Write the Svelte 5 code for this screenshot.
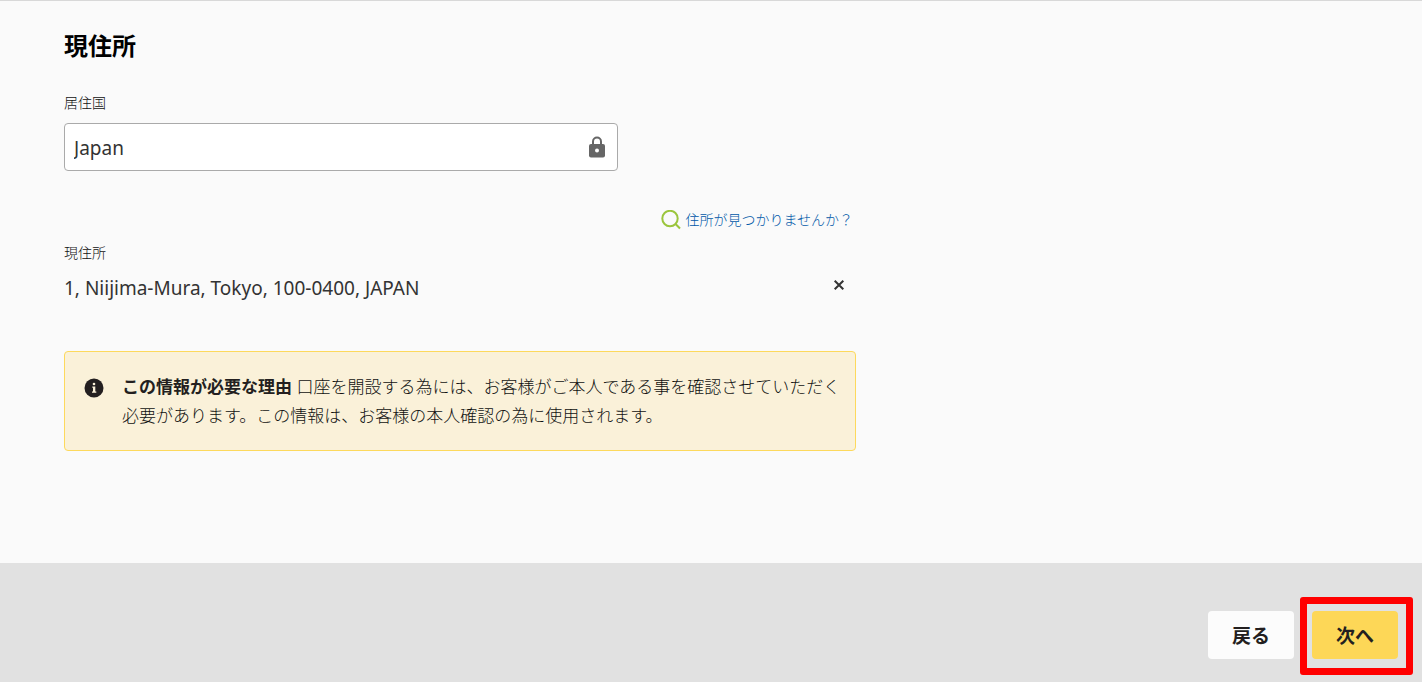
<script>
	let country = 'Japan';
	let address = '1, Niijima-Mura, Tokyo, 100-0400, JAPAN';

	function clearAddress() {
		address = '';
	}
</script>

<div class="page">
	<main class="content">
		<h1>現住所</h1>

		<label class="label" for="country">居住国</label>
		<div class="country-field">
			<input id="country" type="text" value={country} readonly>
			<svg class="lock" viewBox="0 0 18 22" aria-hidden="true">
				<path d="M5 9V5.5a4 4 0 0 1 8 0V9" fill="none" stroke="#666" stroke-width="2" />
				<rect x="1" y="8" width="16" height="13.5" rx="2" fill="#666" />
				<circle cx="9" cy="14.5" r="2" fill="#fff" />
			</svg>
		</div>

		<div class="search-row">
			<a href="#address-search" class="search-link">
				<svg viewBox="0 0 20 20" aria-hidden="true">
					<circle cx="9" cy="8.5" r="7.7" />
					<path d="M14.3 13.8L19 18.5" />
				</svg>
				<span>住所が見つかりませんか？</span>
			</a>
		</div>

		<div class="label">現住所</div>
		<div class="address-row">
			<span>{address}</span>
			<button type="button" class="clear-btn" aria-label="クリア" on:click={clearAddress}>
				<svg viewBox="0 0 10 10" aria-hidden="true">
					<path d="M.7 .7L9.3 9.3M9.3 .7L.7 9.3" />
				</svg>
			</button>
		</div>

		<div class="notice">
			<svg class="info" viewBox="0 0 20 20" aria-hidden="true">
				<circle cx="10" cy="10" r="9.5" fill="#231f20" />
				<path d="M8.3 8.5h3v5h1v1.3H8v-1.3h1V9.8h-.7z" fill="#faf1d9" />
				<circle cx="10" cy="6" r="1.3" fill="#faf1d9" />
			</svg>
			<p><strong>この情報が必要な理由</strong> 口座を開設する為には、お客様がご本人である事を確認させていただく必要があります。この情報は、お客様の本人確認の為に使用されます。</p>
		</div>
	</main>

	<footer class="footer">
		<button type="button" class="btn">戻る</button>
		<div class="next">
			<button type="button" class="btn btn-primary">次へ</button>
			<span class="highlight"></span>
		</div>
	</footer>
</div>

<style>
	:global(body) {
		margin: 0;
		background: #fafafa;
	}

	.page {
		display: flex;
		flex-direction: column;
		min-height: 100vh;
		box-sizing: border-box;
		border-top: 1px solid #d8d8d8;
		background: #fafafa;
		color: #333;
		font-family: "Noto Sans", "Noto Sans CJK JP", sans-serif;
	}

	.content {
		flex: 1;
		box-sizing: border-box;
		width: 100%;
		max-width: 920px;
		padding: 28px 64px;
	}

	h1 {
		margin: 0 0 30px;
		color: #000;
		font-size: 24px;
		line-height: 34px;
		font-weight: bold;
	}

	.label {
		display: block;
		margin-bottom: 10px;
		color: #111;
		font-size: 14px;
		line-height: 20px;
		font-weight: 300;
	}

	.country-field {
		display: flex;
		align-items: center;
		box-sizing: border-box;
		width: 70%;
		height: 48px;
		padding: 0 11px 0 9px;
		border: 1px solid #aaa;
		border-radius: 4px;
		background: #fff;
	}

	.country-field input {
		flex: 1;
		min-width: 0;
		padding: 2px 0 0;
		border: 0;
		outline: none;
		background: transparent;
		color: #333;
		font-family: inherit;
		font-size: 19px;
	}

	.lock {
		width: 18px;
		height: 22px;
	}

	.search-row {
		display: flex;
		justify-content: flex-end;
		margin: 39px 0 13px;
		padding-right: 3px;
	}

	.search-link {
		display: flex;
		align-items: center;
		gap: 4px;
		color: #0058a8;
		font-size: 14px;
		line-height: 20px;
		font-weight: 300;
		text-decoration: none;
	}

	.search-link svg {
		width: 20px;
		height: 20px;
		fill: none;
		stroke: #9bc53d;
		stroke-width: 2;
	}

	.address-row {
		display: flex;
		align-items: flex-start;
		justify-content: space-between;
		padding-right: 10px;
		font-size: 19px;
		line-height: 30px;
	}

	.clear-btn {
		display: flex;
		padding: 7px 0;
		border: 0;
		background: none;
		cursor: pointer;
	}

	.clear-btn svg {
		width: 14px;
		height: 10px;
		fill: none;
		stroke: #333;
		stroke-width: 2;
	}

	.notice {
		display: flex;
		gap: 18px;
		margin-top: 48px;
		padding: 20px 12px 20px 19px;
		border: 1px solid #fdd95c;
		border-radius: 4px;
		background: #faf1d9;
	}

	.info {
		flex: none;
		width: 20px;
		height: 20px;
		margin-top: 6px;
	}

	.notice p {
		margin: 0;
		color: #111;
		font-size: 17px;
		line-height: 29px;
		font-weight: 300;
	}

	.notice strong {
		color: #231f20;
		font-weight: bold;
	}

	.footer {
		display: flex;
		justify-content: flex-end;
		gap: 18px;
		padding: 48px 24px 23px;
		background: #e1e1e1;
	}

	.btn {
		height: 48px;
		padding: 0 24px;
		border: 0;
		border-radius: 4px;
		background: #fcfcfc;
		color: #231f20;
		font-family: inherit;
		font-size: 19px;
		font-weight: bold;
		cursor: pointer;
	}

	.btn-primary {
		background: #fdd757;
	}

	.next {
		position: relative;
	}

	/* frame drawn over the footer, around the next button */
	.highlight {
		position: absolute;
		inset: -14px -15px -16px -12px;
		border: 7px solid #f00;
		border-radius: 3px;
		pointer-events: none;
	}
</style>
